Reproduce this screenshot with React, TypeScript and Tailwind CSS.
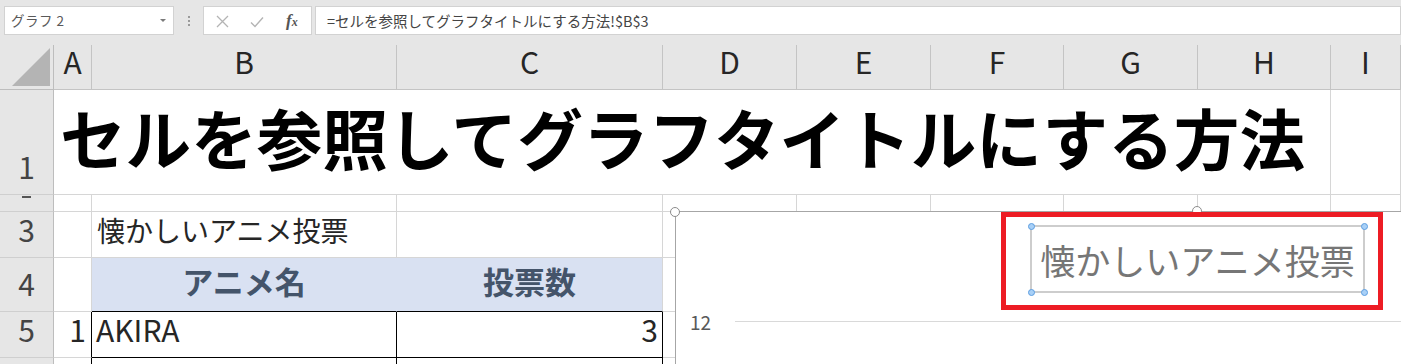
import React from "react"

// Excel-like sheet: formula bar, column/row headers, a small table and a selected chart

const gridLine = "border-r border-b border-[#d6d6d6]"
const colHdr =
  "flex items-end justify-center bg-[#e6e6e6] border-r border-b border-[#c4c4c4] pb-[13px] text-[30px] leading-none text-[#262626]"
const rowHdr =
  "flex items-end justify-center bg-[#e6e6e6] border-r border-r-[#bdbdbd] border-b border-b-[#cfcfcf] pb-[13px] text-[30px] leading-none text-[#444444]"

function Blank({ count }: { count: number }) {
  return (
    <>
      {[...Array(count)].map((_, i) => (
        <div key={i} className={gridLine} />
      ))}
    </>
  )
}

export default function App() {
  const letters = ["A", "B", "C", "D", "E", "F", "G", "H", "I"]

  return (
    <div className="relative h-[364px] w-[1401px] overflow-hidden bg-white font-['Noto_Sans_CJK_JP','Noto_Sans',sans-serif]">
      {/* Formula bar */}
      <div className="flex h-[45px] items-start bg-[#e6e6e6] pl-[4px] pt-[6px]">
        <div className="flex h-[29px] w-[170px] items-center justify-between border border-[#d2d2d2] bg-white pl-[6px] pr-[7px]">
          <span className="text-[13.5px] tracking-[0.5px] text-[#595959]">グラフ 2</span>
          <span className="h-0 w-0 border-x-[3px] border-t-[3px] border-x-transparent border-t-[#7a7a7a]" />
        </div>
        <div className="flex h-[29px] w-[29px] flex-col items-center justify-center gap-[2px]">
          <span className="h-[2px] w-[2px] bg-[#9a9a9a]" />
          <span className="h-[2px] w-[2px] bg-[#9a9a9a]" />
          <span className="h-[2px] w-[2px] bg-[#9a9a9a]" />
        </div>
        <div className="flex h-[29px] w-[109px] items-center border border-[#d2d2d2] bg-white pl-[12px]">
          <svg width="13" height="13" viewBox="0 0 13 13" className="mt-[2px]">
            <path d="M1 1 L12 12 M12 1 L1 12" stroke="#b4b4b4" strokeWidth="1.3" fill="none" />
          </svg>
          <svg width="14" height="12" viewBox="0 0 14 12" className="ml-[21px] mt-[2px]">
            <path d="M1 6.5 L5 10.5 L13 1.5" stroke="#b4b4b4" strokeWidth="1.4" fill="none" />
          </svg>
          <span className="ml-[22px] mt-[1px] font-['Liberation_Serif',serif] text-[17px] italic font-bold text-[#555555]">
            f<span className="text-[12px]">x</span>
          </span>
        </div>
        <div className="ml-[3px] flex h-[29px] flex-1 items-center border border-[#d2d2d2] bg-white pl-[11px] text-[14.5px] text-[#444444]">
          =セルを参照してグラフタイトルにする方法!$B$3
        </div>
      </div>

      {/* Sheet grid */}
      <div className="grid grid-cols-[54px_38px_305px_266px_134px_134px_133px_134px_133px_1fr] grid-rows-[45px_105px_17px_46px_54px_46px_46px]">
        {/* column headers */}
        <div className="relative bg-[#e6e6e6] border-r border-b border-[#bdbdbd]">
          <svg width="54" height="45" className="absolute left-0 top-0">
            <polygon points="12,41 50,41 50,3" fill="#b4b4b4" />
          </svg>
        </div>
        {letters.map((l) => (
          <div key={l} className={colHdr}>
            {l}
          </div>
        ))}

        {/* row 1 */}
        <div className={rowHdr}>1</div>
        <div className="col-span-8 flex items-end border-r border-b border-[#d6d6d6] pb-[24px] pl-[6px]">
          <span className="whitespace-nowrap text-[65.6px] font-bold leading-none text-black">
            セルを参照してグラフタイトルにする方法
          </span>
        </div>
        <div className={gridLine} />

        {/* row 2: label is clipped, only the foot of the digit shows */}
        <div className="flex justify-center bg-[#e6e6e6] border-r border-r-[#bdbdbd] border-b border-b-[#cfcfcf] pt-[1px]">
          <span className="h-[2px] w-[9px] bg-[#555555]" />
        </div>
        <Blank count={9} />

        {/* row 3 */}
        <div className={rowHdr}>3</div>
        <div className={gridLine} />
        <div className={`${gridLine} flex items-end pb-[13px] pl-[5px] text-[28px] leading-none text-[#262626] whitespace-nowrap`}>
          懐かしいアニメ投票
        </div>
        <Blank count={7} />

        {/* row 4 */}
        <div className={rowHdr}>4</div>
        <div className={gridLine} />
        <div className="flex items-end justify-center border-r border-r-[#d9e1f2] border-b border-b-black bg-[#d9e1f2] pb-[15px] text-[31px] font-bold leading-none text-[#44546a]">
          アニメ名
        </div>
        <div className="flex items-end justify-center border-r border-r-[#d6d6d6] border-b border-b-black bg-[#d9e1f2] pb-[15px] text-[31px] font-bold leading-none text-[#44546a]">
          投票数
        </div>
        <Blank count={6} />

        {/* row 5 */}
        <div className={rowHdr}>5</div>
        <div className="flex items-end justify-end border-r border-r-black border-b border-b-[#d6d6d6] pb-[13px] pr-[5px] text-[30px] leading-none text-[#262626]">
          1
        </div>
        <div className="flex items-end border-r border-b border-black pb-[13px] pl-[4px] text-[30px] leading-none text-[#262626]">
          AKIRA
        </div>
        <div className="flex items-end justify-end border-r border-b border-black pb-[13px] pr-[4px] text-[30px] leading-none text-[#262626]">
          3
        </div>
        <Blank count={6} />

        {/* row 6 */}
        <div className="bg-[#e6e6e6] border-r border-r-[#bdbdbd] border-b border-b-[#cfcfcf]" />
        <div className="border-r border-r-black border-b border-b-[#d6d6d6]" />
        <div className="border-r border-b border-black" />
        <div className="border-r border-b border-black" />
        <Blank count={6} />
      </div>

      {/* Chart (selected) */}
      <div className="absolute left-[675px] top-[211px] h-[300px] w-[1044px] border border-[#a6a6a6] bg-white">
        <span className="absolute left-[14px] top-[96px] text-[19px] text-[#595959]">12</span>
        <div className="absolute left-[59px] right-0 top-[109px] h-[1px] bg-[#d9d9d9]" />
        <div className="absolute left-[354px] top-[13px] flex h-[68px] w-[335px] items-center justify-center border-2 border-[#cdcdcd]">
          <span className="whitespace-nowrap text-[35px] leading-none text-[#767676]">懐かしいアニメ投票</span>
          <span className="absolute -left-[4.5px] -top-[4.5px] h-[7px] w-[7px] rounded-full border border-[#5d9ee0] bg-[#a8d0f7]" />
          <span className="absolute -right-[4.5px] -top-[4.5px] h-[7px] w-[7px] rounded-full border border-[#5d9ee0] bg-[#a8d0f7]" />
          <span className="absolute -bottom-[4.5px] -left-[4.5px] h-[7px] w-[7px] rounded-full border border-[#5d9ee0] bg-[#a8d0f7]" />
          <span className="absolute -bottom-[4.5px] -right-[4.5px] h-[7px] w-[7px] rounded-full border border-[#5d9ee0] bg-[#a8d0f7]" />
        </div>
      </div>
      <span className="absolute left-[670px] top-[207px] h-[10px] w-[10px] rounded-full border-[1.5px] border-[#8c8c8c] bg-white" />
      <span className="absolute left-[1192px] top-[206px] h-[10px] w-[10px] rounded-full border-[1.5px] border-[#8c8c8c] bg-white" />

      {/* Red highlight */}
      <div className="absolute left-[1001px] top-[212px] h-[98px] w-[382px] border-[5px] border-[#ed1c24]" />
    </div>
  )
}
